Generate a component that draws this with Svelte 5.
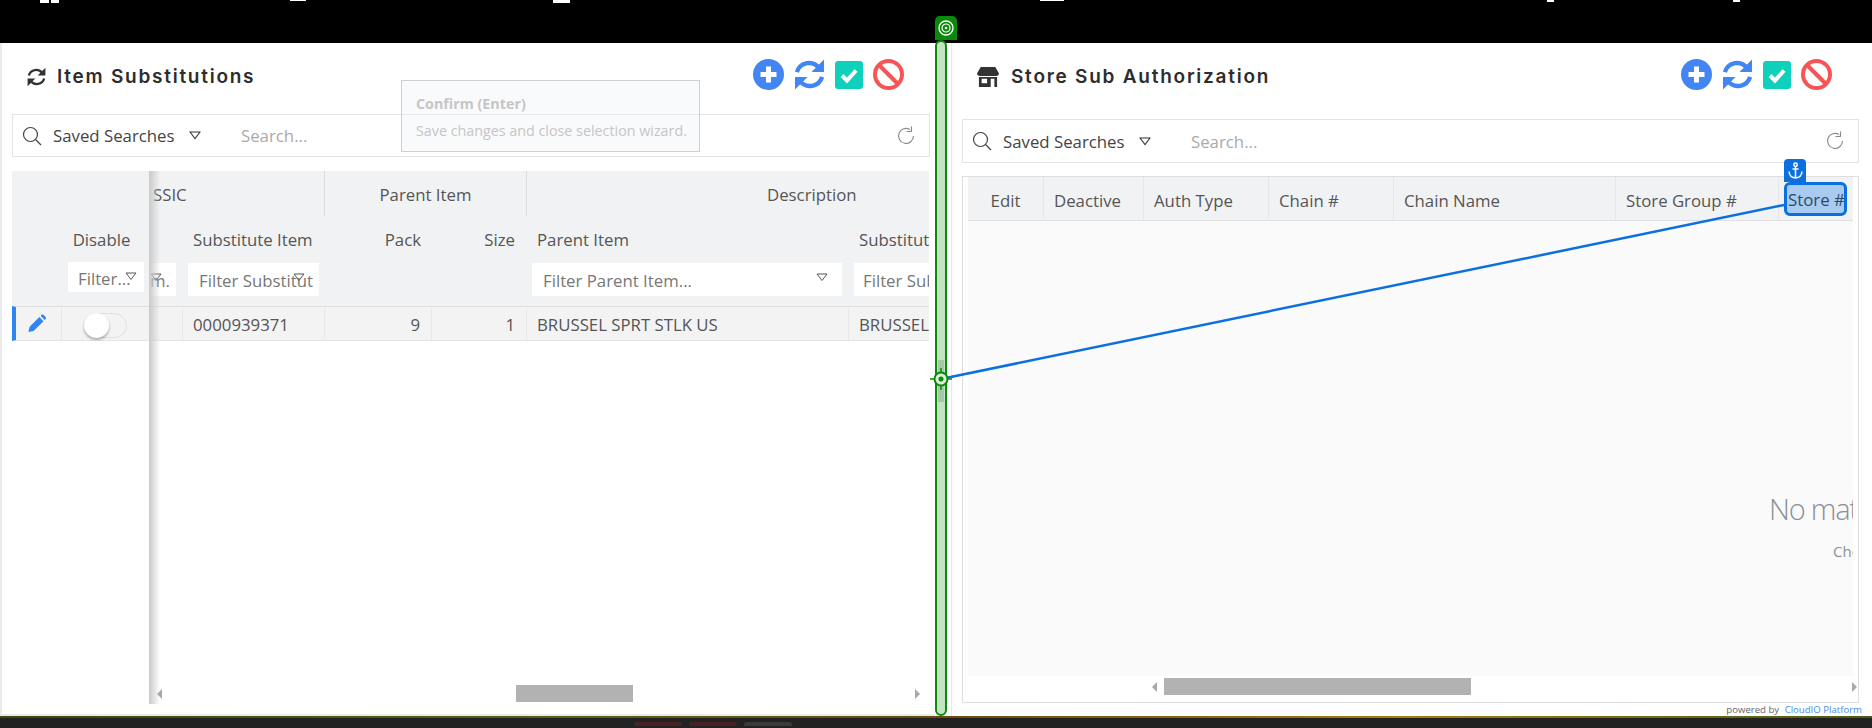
<script lang="ts">
	const panelIcons = ['add', 'sync', 'check', 'ban'];

	// bottom edge of the nav row, cut off by the top of the window
	const navIcons = [
		{ x: 40, w: 9, h: 3 },
		{ x: 51, w: 8, h: 3 },
		{ x: 290, w: 16, h: 1 },
		{ x: 553, w: 17, h: 3 },
		{ x: 1040, w: 24, h: 1 },
		{ x: 1547, w: 7, h: 2 },
		{ x: 1733, w: 7, h: 2 }
	];
	const navGlyphs = [195, 955, 1110, 1170, 1613, 1800];
</script>

{#snippet actions()}
	<div class="actions">
		{#each panelIcons as icon}
			{#if icon === 'add'}
				<svg width="31" height="31" viewBox="0 0 31 31"><circle cx="15.5" cy="15.5" r="15.5" fill="#4285f4" /><path d="M15.5 7.5v16M7.5 15.5h16" stroke="#fff" stroke-width="5" /></svg>
			{:else if icon === 'sync'}
				<svg width="31" height="31" viewBox="0 0 32 31"><g fill="none" stroke="#4285f4" stroke-width="4.5"><path d="M3 13A13 13 0 0 1 26 9" /><path d="M29 18A13 13 0 0 1 6 22" /></g><path d="M31 0v13H18zM1 31V18h13z" fill="#4285f4" /></svg>
			{:else if icon === 'check'}
				<svg width="28" height="28" viewBox="0 0 28 28"><rect width="28" height="28" rx="3" fill="#0fd1bb" /><path d="M7 14.5l5 5 9-10" fill="none" stroke="#fff" stroke-width="4" /></svg>
			{:else}
				<svg width="31" height="31" viewBox="0 0 31 31"><circle cx="15.500" cy="15.500" r="13.500" fill="none" stroke="#f65555" stroke-width="4" /><path d="M6 6l19 19" stroke="#f65555" stroke-width="4" /></svg>
			{/if}
		{/each}
	</div>
{/snippet}

{#snippet searchBar()}
	<div class="search">
		<svg class="lens" width="20" height="20" viewBox="0 0 20 20"><circle cx="8.5" cy="8.5" r="7" fill="none" stroke="#444" stroke-width="1.2" /><path d="M13.5 13.5l5.5 5.5" stroke="#444" stroke-width="1.2" /></svg>
		<span class="saved">Saved Searches</span>
		<svg class="caret" width="12" height="9" viewBox="0 0 12 9"><path d="M1 1h10L6 7.5z" fill="none" stroke="#333" stroke-width="1.1" /></svg>
		<span class="placeholder">Search...</span>
		<svg class="reload" width="20" height="20" viewBox="0 0 20 20"><path d="M17.5 10A7.5 7.5 0 1 1 14 3.6" fill="none" stroke="#888" stroke-width="1.1" /><path d="M15.5 .5v5h-5" fill="none" stroke="#888" stroke-width="1.1" /></svg>
	</div>
{/snippet}

{#snippet filterCaret()}
	<svg class="fcaret" width="12" height="9" viewBox="0 0 12 9"><path d="M1 1h10L6 7.5z" fill="none" stroke="#555" stroke-width="1" /></svg>
{/snippet}

<div class="screen">
	<div class="topbar">
		{#each navIcons as n}
			<i style:left="{n.x}px" style:width="{n.w}px" style:height="{n.h}px"></i>
		{/each}
		{#each navGlyphs as x}
			<span style:left="{x}px">g</span>
		{/each}
	</div>

	<div class="main">
		<section class="panel left">
			<header>
				<svg class="title-icon" width="19" height="22" viewBox="0 0 32 31"><g fill="none" stroke="#333" stroke-width="4"><path d="M3 13A13 13 0 0 1 26 9" /><path d="M29 18A13 13 0 0 1 6 22" /></g><path d="M31 0v13H18zM1 31V18h13z" fill="#333" /></svg>
				<h2>Item Substitutions</h2>
				{@render actions()}
			</header>
			{@render searchBar()}

			<div class="grid-wrap">
				<div class="grid">
					<div class="group g1"><span>SSIC</span></div>
					<div class="group g2">Parent Item</div>
					<div class="group g3">Description</div>

					<div class="head c0">
						<div class="filter behind"><span>m.</span>{@render filterCaret()}</div>
					</div>
					<div class="head c1">
						<span class="label">Substitute Item</span>
						<div class="filter"><span>Filter Substitut</span>{@render filterCaret()}</div>
					</div>
					<div class="head c2 right"><span class="label">Pack</span></div>
					<div class="head c3 right"><span class="label">Size</span></div>
					<div class="head c4">
						<span class="label">Parent Item</span>
						<div class="filter"><span>Filter Parent Item...</span>{@render filterCaret()}</div>
					</div>
					<div class="head c5">
						<span class="label">Substitute Description</span>
						<div class="filter"><span>Filter Substitute Description...</span></div>
					</div>

					<div class="cell c0"></div>
					<div class="cell c1">0000939371</div>
					<div class="cell c2 right">9</div>
					<div class="cell c3 right">1</div>
					<div class="cell c4">BRUSSEL SPRT STLK US</div>
					<div class="cell c5">BRUSSEL SPRT STLK US</div>
				</div>

				<div class="frozen">
					<div class="frozen-head">
						<span class="label">Disable</span>
						<div class="filter"><span>Filter...</span>{@render filterCaret()}</div>
					</div>
					<div class="frozen-row">
						<div class="edit">
							<svg width="20" height="19" viewBox="0 0 20 20"><path d="M1 19l1.200-5.500L12.500 3.200l4.300 4.300L6.500 17.800zM13.800 1.900l1-1q1-.8 2 0l2.300 2.300q.8 1 0 2l-1 1z" fill="#2f86f0" /></svg>
						</div>
						<div class="toggle"><b></b></div>
					</div>
				</div>
			</div>
			<div class="hscroll left-scroll">
				<span class="arrow l"></span><span class="thumb"></span><span class="arrow r"></span>
			</div>
		</section>

		<div class="splitter"><span class="splitter-thumb"></span></div>

		<section class="panel right-panel">
			<header>
				<svg class="title-icon" width="24" height="20" viewBox="0 0 24 22"><path d="M4 0h16l4 7q0 3-3 3H3Q0 10 0 7z" fill="#333" /><path d="M2 11h20v11h-3V13h-4v9H2zM5 13v5h6v-5z" fill="#333" fill-rule="evenodd" /></svg>
				<h2>Store Sub Authorization</h2>
				{@render actions()}
			</header>
			{@render searchBar()}

			<div class="store-table">
				<div class="store-head">
					<div style="width:76px" class="center">Edit</div>
					<div style="width:100px">Deactive</div>
					<div style="width:125px">Auth Type</div>
					<div style="width:125px">Chain #</div>
					<div style="width:222px">Chain Name</div>
					<div style="width:163px">Store Group #</div>
					<div class="store-col">Store #</div>
				</div>
				<div class="store-body">
					<p class="nomatch">No matching records</p>
					<p class="check">Check your filters</p>
				</div>
				<div class="hscroll right-scroll">
					<span class="arrow l"></span><span class="thumb"></span><span class="arrow r"></span>
				</div>
			</div>
			<div class="powered">powered by <span>CloudIO Platform</span></div>
		</section>
	</div>

	<div class="taskbar">
		<span class="strip"></span>
		<div class="tasks"><i class="red"></i><i class="red"></i><i class="grey"></i></div>
	</div>

	<!-- design-mode overlays sitting above the panels -->
	<div class="tooltip">
		<strong>Confirm (Enter)</strong>
		<span>Save changes and close selection wizard.</span>
	</div>

	<div class="split-tab">
		<svg width="16" height="16" viewBox="0 0 16 16" fill="none" stroke="#fff"><circle cx="8" cy="8" r="7" stroke-width="1.300" /><circle cx="8" cy="8" r="4" stroke-width="1.200" /><circle cx="8" cy="8" r="1.300" fill="#fff" stroke="none" /></svg>
	</div>

	<svg class="connector" width="1872" height="728">
		<path d="M941 379L1784 205" stroke="#0a6fdf" stroke-width="2.500" />
		<path d="M930 379h22M941 368v22" stroke="#0a8a0a" stroke-width="1.500" />
		<circle cx="941" cy="379" r="6.500" fill="#d8efd8" stroke="#0a8a0a" stroke-width="2" />
		<circle cx="941" cy="379" r="2.500" fill="#0a8a0a" />
	</svg>

	<div class="anchor">
		<svg width="15" height="17" viewBox="0 0 15 17" fill="none" stroke="#fff" stroke-width="1.500"><circle cx="7.500" cy="2.700" r="1.700" /><path d="M7.500 4.500V16M4.500 7h6M1 9.500q.5 6 6.500 6.500q6-.5 6.500-6.500" /></svg>
	</div>
	<div class="anchor-box">Store #</div>
</div>

<style>
	:global(body) {
		margin: 0;
		background: #000;
	}
	.screen {
		position: relative;
		width: 1872px;
		height: 728px;
		overflow: hidden;
		font-family: 'Open Sans', 'Noto Sans', sans-serif;
		font-size: 16.8px;
		color: #444;
		background: #000;
	}
	.topbar {
		position: relative;
		height: 43px;
		overflow: hidden;
		background: #000;
	}
	.topbar i {
		position: absolute;
		top: 0;
		background: #fff;
	}
	.topbar span {
		position: absolute;
		top: -20px;
		font-size: 16px;
		line-height: 20px;
		color: #fff;
	}
	.main {
		display: flex;
		height: 673px;
		background: #fff;
	}
	.panel {
		position: relative;
		box-sizing: border-box;
		background: #fff;
	}
	.left {
		width: 935px;
		border-left: 2px solid #ebebeb;
		border-bottom: 2px solid #ebebeb;
		padding: 0 5px 0 10px;
	}
	.right-panel {
		flex: 1;
		border-left: 1px solid #eaeaea;
		padding: 0 13px 0 10px;
		margin-left: 4px;
	}
	header {
		display: flex;
		align-items: center;
		box-sizing: border-box;
		height: 71px;
		padding-left: 15px;
		padding-bottom: 4px;
	}
	.right-panel header {
		height: 76px;
		padding-left: 14px;
		padding-bottom: 9px;
	}
	.title-icon {
		margin-right: 11px;
		flex: none;
	}
	h2 {
		margin: 0;
		font-family: Inter, sans-serif;
		font-size: 19px;
		font-weight: 600;
		letter-spacing: 1.75px;
		color: #2d2d2d;
		white-space: nowrap;
	}
	.actions {
		margin-left: auto;
		display: flex;
		align-items: center;
		gap: 10px;
		margin-right: 26px;
		margin-top: -4px;
	}
	.right-panel .actions {
		margin-right: 27px;
	}
	.search {
		box-sizing: border-box;
		display: flex;
		align-items: center;
		height: 43px;
		border: 1px solid #e3e3e3;
		padding: 0 13px 0 9px;
		background: #fff;
	}
	.right-panel .search {
		height: 44px;
		width: 897px;
	}
	.lens {
		margin-right: 11px;
	}
	.saved {
		width: 122px;
		white-space: nowrap;
		color: #444;
	}
	.caret {
		margin-left: 14px;
		margin-right: 40px;
	}
	.placeholder {
		color: #aaa;
	}
	.reload {
		margin-left: auto;
	}
	.grid-wrap {
		position: relative;
		margin-top: 14px;
		width: 917px;
		height: 170px;
		overflow: hidden;
	}
	.grid {
		display: grid;
		grid-template-columns: 171px 142px 107px 95px 322px 300px;
		grid-template-rows: 45px 90px 35px;
		width: 1137px;
	}
	.group {
		background: #f1f2f4;
		display: flex;
		align-items: center;
		justify-content: center;
		color: #555;
		border-right: 1px solid #dcdde0;
		box-sizing: border-box;
		height: 45px;
		padding-top: 2px;
	}
	.g1 {
		grid-column: 1 / 3;
		justify-content: flex-start;
		padding-left: 141px;
	}
	.g2 {
		grid-column: 3 / 5;
	}
	.g3 {
		grid-column: 5 / 7;
		justify-content: flex-start;
		padding-left: 240px;
		border-right: 0;
	}
	.head {
		box-sizing: border-box;
		background: #f1f2f4;
		padding: 13px 10px 0;
		position: relative;
		white-space: nowrap;
		overflow: hidden;
	}
	.head.right {
		text-align: right;
		padding-right: 11px;
	}
	.c3.right {
		padding-right: 12px;
	}
	.label {
		display: block;
		height: 34px;
		line-height: 22px;
		color: #555;
	}
	.filter {
		position: relative;
		box-sizing: border-box;
		display: flex;
		align-items: center;
		height: 33px;
		margin-left: -5px;
		padding-left: 9px;
		padding-top: 2px;
		background: #fff;
		color: #777;
		overflow: hidden;
		white-space: nowrap;
	}
	.c1 .filter {
		margin-right: -4px;
		padding-left: 11px;
	}
	.c4 .filter {
		margin-right: -3px;
		padding-left: 11px;
	}
	.c5 .filter {
		margin-right: -40px;
	}
	.fcaret {
		position: absolute;
		right: 14px;
		top: 10px;
	}
	.c0 .behind {
		position: absolute;
		left: 130px;
		right: 7px;
		top: 47px;
		margin: 0;
		padding-left: 8px;
	}
	.c0 .behind .fcaret {
		right: 14px;
	}
	.cell {
		box-sizing: border-box;
		height: 35px;
		line-height: 35px;
		background: #f3f3f3;
		border-top: 1px solid #dcdde2;
		border-bottom: 1px solid #e5e5e5;
		border-right: 1px solid #e8e8e8;
		padding: 0 10px;
		color: #555;
		white-space: nowrap;
		overflow: hidden;
	}
	.cell.right {
		text-align: right;
		padding-right: 11px;
	}
	.frozen {
		position: absolute;
		left: 0;
		top: 0;
		width: 137px;
		height: 170px;
		background: #f1f2f4;
	}
	.frozen-head {
		box-sizing: border-box;
		height: 135px;
		padding: 58px 9px 0 56px;
	}
	.frozen-head .label {
		height: 34px;
		margin-left: 0;
		text-align: center;
		padding-right: 5px;
	}
	.frozen-head .filter {
		margin: -1px 0 0 0;
		height: 30px;
		width: 76px;
		padding-left: 10px;
	}
	.frozen-head .fcaret {
		right: 7px;
	}
	.frozen-row {
		display: flex;
		height: 35px;
		box-sizing: border-box;
		background: #f3f3f3;
		border-left: 4px solid #2f86f0;
		border-top: 1px solid #dcdde2;
		border-bottom: 1px solid #e5e5e5;
	}
	.edit {
		width: 46px;
		box-sizing: border-box;
		border-right: 1px solid #e8e8e8;
		padding: 7px 0 0 11px;
	}
	.toggle {
		position: relative;
		margin: 6px 0 0 22px;
		width: 43px;
		height: 25px;
		border: 1px solid #e0e0e0;
		border-radius: 13px;
		box-sizing: border-box;
		background: #f3f3f3;
	}
	.toggle b {
		position: absolute;
		left: -1px;
		top: -1px;
		width: 25px;
		height: 25px;
		border-radius: 50%;
		background: #fff;
		box-shadow: 0 2px 3px rgba(0, 0, 0, 0.3);
	}
	.left-scroll {
		position: absolute;
		left: 155px;
		top: 642px;
		width: 763px;
	}
	.left-scroll .thumb {
		margin-left: 354px;
		width: 117px;
	}
	/* shadow that runs down the frozen column edge */
	.left::after {
		content: '';
		position: absolute;
		left: 147px;
		top: 128px;
		bottom: 10px;
		width: 11px;
		background: linear-gradient(to right, #c9c9c9, rgba(255, 255, 255, 0));
	}
	.hscroll {
		display: flex;
		align-items: center;
		height: 17px;
	}
	.hscroll .thumb {
		height: 17px;
		background: #b3b2b3;
		flex: none;
	}
	.arrow {
		flex: none;
		width: 0;
		height: 0;
		border-top: 5px solid transparent;
		border-bottom: 5px solid transparent;
	}
	.arrow.l {
		border-right: 5px solid #a8a8a8;
	}
	.arrow.r {
		margin-left: auto;
		border-left: 5px solid #a8a8a8;
	}
	.splitter {
		position: relative;
		box-sizing: border-box;
		width: 12px;
		height: 676px;
		margin-top: -3px;
		border: 2px solid #0a8a0a;
		border-radius: 6px;
		background: #c3e3c3;
		flex: none;
	}
	.splitter-thumb {
		position: absolute;
		left: 1px;
		top: 318px;
		width: 6px;
		height: 42px;
		background: #a5c9a5;
	}
	.store-table {
		box-sizing: border-box;
		margin-top: 13px;
		width: 897px;
		height: 527px;
		border: 1px solid #dedede;
		padding-left: 5px;
		padding-right: 5px;
		overflow: hidden;
		display: flex;
		flex-direction: column;
	}
	.store-head {
		display: flex;
		flex: none;
		height: 44px;
		background: #f1f2f4;
		border-bottom: 1px solid #dfe0e3;
		box-sizing: border-box;
		line-height: 47px;
		color: #555;
	}
	.store-head > div {
		box-sizing: border-box;
		flex: none;
		padding-left: 10px;
		border-right: 1px solid #e6e7ea;
		white-space: nowrap;
	}
	.store-head .center {
		padding-left: 0;
		text-align: center;
	}
	.store-col {
		flex: 1 !important;
		border-right: 0 !important;
	}
	.store-body {
		flex: none;
		position: relative;
		height: 455px;
		background: #fafafa;
		overflow: hidden;
	}
	.nomatch,
	.check {
		position: absolute;
		margin: 0;
		white-space: nowrap;
		color: #8a9099;
	}
	.nomatch {
		left: 801px;
		top: 269px;
		font-size: 29px;
		font-weight: 300;
		letter-spacing: -1.2px;
		line-height: 38px;
	}
	.check {
		left: 865px;
		top: 320px;
		font-size: 15px;
	}
	.right-scroll {
		margin: 2px -4px 0 0;
	}
	.right-scroll .arrow.l {
		margin-left: 184px;
	}
	.right-scroll .thumb {
		margin-left: 7px;
		width: 307px;
	}
	.powered {
		position: absolute;
		right: 10px;
		top: 661px;
		font-size: 9.6px;
		line-height: 12px;
		color: #666;
	}
	.powered span {
		margin-left: 3px;
		color: #4a8df0;
	}
	.taskbar {
		position: relative;
		height: 12px;
		background: #222;
	}
	.strip {
		display: block;
		height: 2px;
		background: linear-gradient(to right, #3a4a10, #56621a 30%, #6a4a14 50%, #a08010 75%, #4a5a18);
	}
	.tasks {
		position: absolute;
		left: 634px;
		top: 6px;
		display: flex;
		gap: 7px;
	}
	.tasks i {
		display: block;
		width: 48px;
		height: 4px;
		border-radius: 3px 3px 0 0;
	}
	.tasks .red {
		background: #4a2020;
	}
	.tasks .grey {
		background: #3a3a3a;
	}
	.tooltip {
		position: absolute;
		left: 401px;
		top: 80px;
		box-sizing: border-box;
		width: 299px;
		height: 72px;
		padding: 13px 14px 0;
		display: flex;
		flex-direction: column;
		gap: 8px;
		background: rgba(240, 242, 245, 0.4);
		border: 1px solid #cfd0d2;
		font-size: 14.3px;
		color: #c6c6c6;
		white-space: nowrap;
	}
	.tooltip strong {
		font-weight: 700;
	}
	.split-tab {
		position: absolute;
		left: 935px;
		top: 16px;
		width: 22px;
		height: 24px;
		display: flex;
		align-items: center;
		justify-content: center;
		background: #0a8a0a;
		border-radius: 5px 5px 0 0;
	}
	.connector {
		position: absolute;
		left: 0;
		top: 0;
		pointer-events: none;
	}
	.anchor {
		position: absolute;
		left: 1784px;
		top: 159px;
		width: 22px;
		height: 23px;
		display: flex;
		align-items: center;
		justify-content: center;
		background: #0a6fdf;
		border-radius: 4px 4px 0 0;
	}
	.anchor-box {
		position: absolute;
		left: 1784px;
		top: 182px;
		box-sizing: border-box;
		width: 63px;
		height: 34px;
		padding-left: 1px;
		line-height: 29px;
		background: #a9cbef;
		border: 3px solid #0a6fdf;
		border-radius: 6px;
		color: #2d4a68;
		white-space: nowrap;
		overflow: hidden;
	}
</style>
